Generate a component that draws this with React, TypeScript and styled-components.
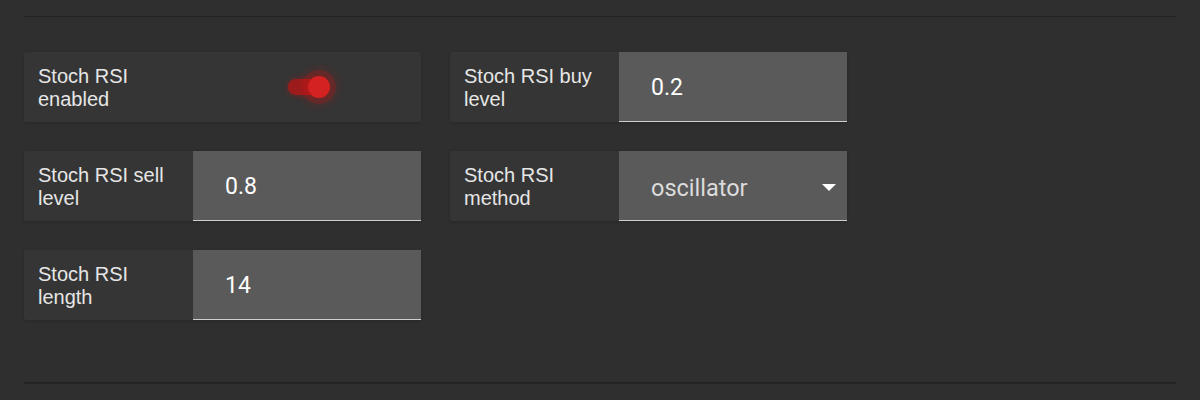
import React from 'react'
import styled, { createGlobalStyle } from 'styled-components'

const GlobalStyle = createGlobalStyle`
  html, body {
    margin: 0;
    padding: 0;
    background: #2f2f2f;
  }
  body {
    font-family: 'Liberation Sans', Arial, sans-serif;
  }
`

const Page = styled.div`
  padding: 16px 24px 0;
  height: 400px;
  box-sizing: border-box;
  background: #2f2f2f;
`

const Section = styled.section`
  border-top: 1px solid #232323;
  border-bottom: 2px solid #242424;
  padding: 35px 0 62px;
`

const Grid = styled.div`
  display: grid;
  grid-template-columns: 397px 397px;
  grid-auto-rows: 70px;
  column-gap: 29px;
  row-gap: 29px;
`

const Card = styled.div`
  display: flex;
  align-items: stretch;
  background: #353535;
  box-shadow: 0 1px 3px rgba(0, 0, 0, 0.18);
  border-radius: 2px;
`

const Label = styled.div`
  width: 169px;
  flex: none;
  box-sizing: border-box;
  padding: 2px 20px 0 14px;
  display: flex;
  align-items: center;
  font-size: 20px;
  line-height: 23px;
  color: #e6e6e6;
`

const Field = styled.div<{ $select?: boolean }>`
  flex: 1;
  position: relative;
  display: flex;
  align-items: center;
  background: #5a5a5a;
  border-bottom: 1px solid #cfcfcf;
  padding: ${(p) => (p.$select ? '4px' : '2px')} 0 0 32px;
  font-family: Roboto, 'Liberation Sans', sans-serif;
  font-size: ${(p) => (p.$select ? '23.5px' : '23px')};
  color: ${(p) => (p.$select ? '#dcdcdc' : '#ffffff')};
`

const Caret = styled.span`
  position: absolute;
  right: 11px;
  top: 50%;
  margin-top: -2px;
  width: 0;
  height: 0;
  border-left: 7px solid transparent;
  border-right: 7px solid transparent;
  border-top: 7px solid #ffffff;
`

const SwitchWrap = styled.div`
  display: flex;
  align-items: center;
  padding-left: 95px;
`

const Switch = styled.div`
  position: relative;
  width: 34px;
  height: 16px;
  border-radius: 8px;
  background: #9c1c1c;
  box-shadow: 0 0 4px 2px rgba(156, 28, 28, 0.35);
`

const Thumb = styled.span`
  position: absolute;
  left: 20px;
  top: 50%;
  width: 22px;
  height: 22px;
  margin-top: -11px;
  border-radius: 50%;
  background: #d42222;
  box-shadow: 0 0 0 6px rgba(200, 20, 20, 0.22), 0 0 8px 8px rgba(200, 20, 20, 0.18);
`

type InputCardProps = {
  label: string
  value: string
  select?: boolean
}

const InputCard = ({ label, value, select }: InputCardProps) => (
  <Card>
    <Label>{label}</Label>
    <Field $select={select}>
      {value}
      {select && <Caret />}
    </Field>
  </Card>
)

const App = () => {
  return (
    <>
      <GlobalStyle />
      <Page>
        <Section>
          <Grid>
            <Card>
              <Label>Stoch RSI enabled</Label>
              <SwitchWrap>
                <Switch>
                  <Thumb />
                </Switch>
              </SwitchWrap>
            </Card>
            <InputCard label="Stoch RSI buy level" value="0.2" />
            <InputCard label="Stoch RSI sell level" value="0.8" />
            <InputCard label="Stoch RSI method" value="oscillator" select />
            <InputCard label="Stoch RSI length" value="14" />
          </Grid>
        </Section>
      </Page>
    </>
  )
}

export default App
